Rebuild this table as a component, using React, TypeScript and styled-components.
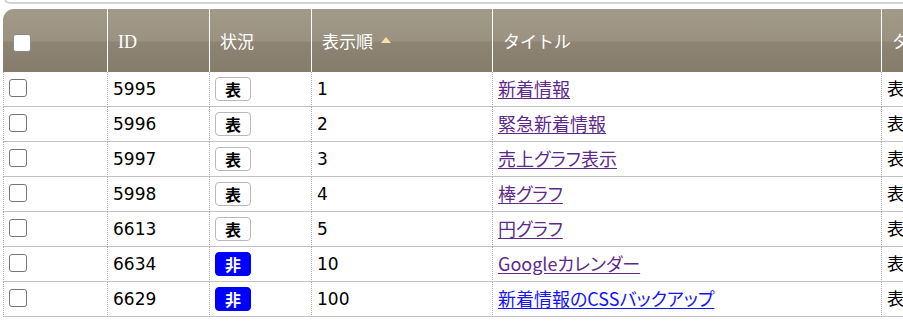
import React from "react";
import styled, { createGlobalStyle } from "styled-components";

const GlobalStyle = createGlobalStyle`
  html, body {
    margin: 0;
    padding: 0;
    background: #fff;
  }
  body {
    font-family: "DejaVu Sans", "Noto Sans CJK JP", sans-serif;
    color: #000;
  }
`;

const Page = styled.div`
  width: 903px;
  height: 333px;
  overflow: hidden;
  padding-left: 3px;
  box-sizing: border-box;
`;

const PanelEdge = styled.div`
  height: 2px;
  margin-left: 1px;
  margin-top: -4px;
  padding-top: 4px;
  border: 2px solid #d4d4d4;
  border-top: none;
  border-right: none;
  border-radius: 0 0 0 6px;
`;

const Wrap = styled.div`
  margin-top: 5px;
  width: 900px;
  overflow: hidden;
`;

const Table = styled.table`
  width: 1000px;
  table-layout: fixed;
  border-collapse: separate;
  border-spacing: 0;
  font-size: 17px;
`;

const HeadCell = styled.th<{ $first?: boolean }>`
  height: 63px;
  padding: 0 0 0 10px;
  box-sizing: border-box;
  text-align: left;
  font-weight: normal;
  color: #fff;
  font-size: 17px;
  font-family: "Noto Sans CJK JP", sans-serif;
  vertical-align: middle;
  border-left: ${(p) => (p.$first ? "none" : "1px solid #fff")};
  border-top-left-radius: ${(p) => (p.$first ? "11px" : "0")};
  background: linear-gradient(
    #a19987 0%,
    #9b9281 50%,
    #8d8473 53%,
    #867c6b 100%
  );
  white-space: nowrap;
  overflow: hidden;
`;

const SerifLabel = styled.span`
  font-family: "Liberation Serif", serif;
  font-size: 18px;
`;

const SortMark = styled.span`
  display: inline-block;
  margin-left: 8px;
  width: 0;
  height: 0;
  border-left: 5px solid transparent;
  border-right: 5px solid transparent;
  border-bottom: 6px solid #f4e3a2;
  vertical-align: 5px;
`;

const Cell = styled.td<{ $pad?: number }>`
  height: 35px;
  padding: 0 0 0 ${(p) => p.$pad ?? 5}px;
  box-sizing: border-box;
  border-bottom: 1px solid #c3c3c3;
  border-left: 1px dotted #a9a9a9;
  white-space: nowrap;
  overflow: hidden;
  vertical-align: middle;
  line-height: 22px;
`;

const CheckCell = styled(Cell)`
  vertical-align: top;
  padding-top: 4px;
`;

const Check = styled.span<{ $head?: boolean }>`
  display: inline-block;
  width: 18px;
  height: 18px;
  box-sizing: border-box;
  border: 1px solid ${(p) => (p.$head ? "#8a8a8a" : "#767676")};
  border-radius: 3px;
  background: #fff;
  vertical-align: middle;
`;

const Badge = styled.span<{ $hidden?: boolean }>`
  display: inline-flex;
  align-items: center;
  justify-content: center;
  width: 36px;
  height: 24px;
  box-sizing: border-box;
  border-radius: 4px;
  font-weight: bold;
  font-size: 16px;
  font-family: "Noto Sans CJK JP", sans-serif;
  border: 1px solid ${(p) => (p.$hidden ? "#0000ff" : "#b9b9b9")};
  background: ${(p) => (p.$hidden ? "#0000ff" : "#fff")};
  color: ${(p) => (p.$hidden ? "#fff" : "#000")};
`;

const TitleLink = styled.a<{ $visited?: boolean }>`
  color: ${(p) => (p.$visited ? "#5d2a8c" : "#1414ff")};
  font-family: "Noto Sans CJK JP", sans-serif;
  font-feature-settings: "palt";
  font-size: 18px;
  text-decoration: underline;
  text-underline-offset: 2px;
  cursor: pointer;
`;

type Row = {
  id: number;
  shown: boolean;
  order: number;
  title: string;
  visited: boolean;
};

const rows: Row[] = [
  { id: 5995, shown: true, order: 1, title: "新着情報", visited: true },
  { id: 5996, shown: true, order: 2, title: "緊急新着情報", visited: true },
  { id: 5997, shown: true, order: 3, title: "売上グラフ表示", visited: true },
  { id: 5998, shown: true, order: 4, title: "棒グラフ", visited: true },
  { id: 6613, shown: true, order: 5, title: "円グラフ", visited: true },
  { id: 6634, shown: false, order: 10, title: "Googleカレンダー", visited: true },
  { id: 6629, shown: false, order: 100, title: "新着情報のCSSバックアップ", visited: false },
];

export default function App() {
  return (
    <Page>
      <GlobalStyle />
      <PanelEdge />
      <Wrap>
        <Table>
          <colgroup>
            <col style={{ width: 104 }} />
            <col style={{ width: 102 }} />
            <col style={{ width: 102 }} />
            <col style={{ width: 181 }} />
            <col style={{ width: 389 }} />
            <col style={{ width: 122 }} />
          </colgroup>
          <thead>
            <tr>
              <HeadCell $first>
                <Check $head />
              </HeadCell>
              <HeadCell>
                <SerifLabel>ID</SerifLabel>
              </HeadCell>
              <HeadCell>状況</HeadCell>
              <HeadCell>
                表示順
                <SortMark />
              </HeadCell>
              <HeadCell>タイトル</HeadCell>
              <HeadCell>タイプ</HeadCell>
            </tr>
          </thead>
          <tbody>
            {rows.map((r) => (
              <tr key={r.id}>
                <CheckCell>
                  <Check />
                </CheckCell>
                <Cell>{r.id}</Cell>
                <Cell>
                  <Badge $hidden={!r.shown}>{r.shown ? "表" : "非"}</Badge>
                </Cell>
                <Cell>{r.order}</Cell>
                <Cell>
                  <TitleLink $visited={r.visited}>{r.title}</TitleLink>
                </Cell>
                <Cell>表示</Cell>
              </tr>
            ))}
          </tbody>
        </Table>
      </Wrap>
    </Page>
  );
}
